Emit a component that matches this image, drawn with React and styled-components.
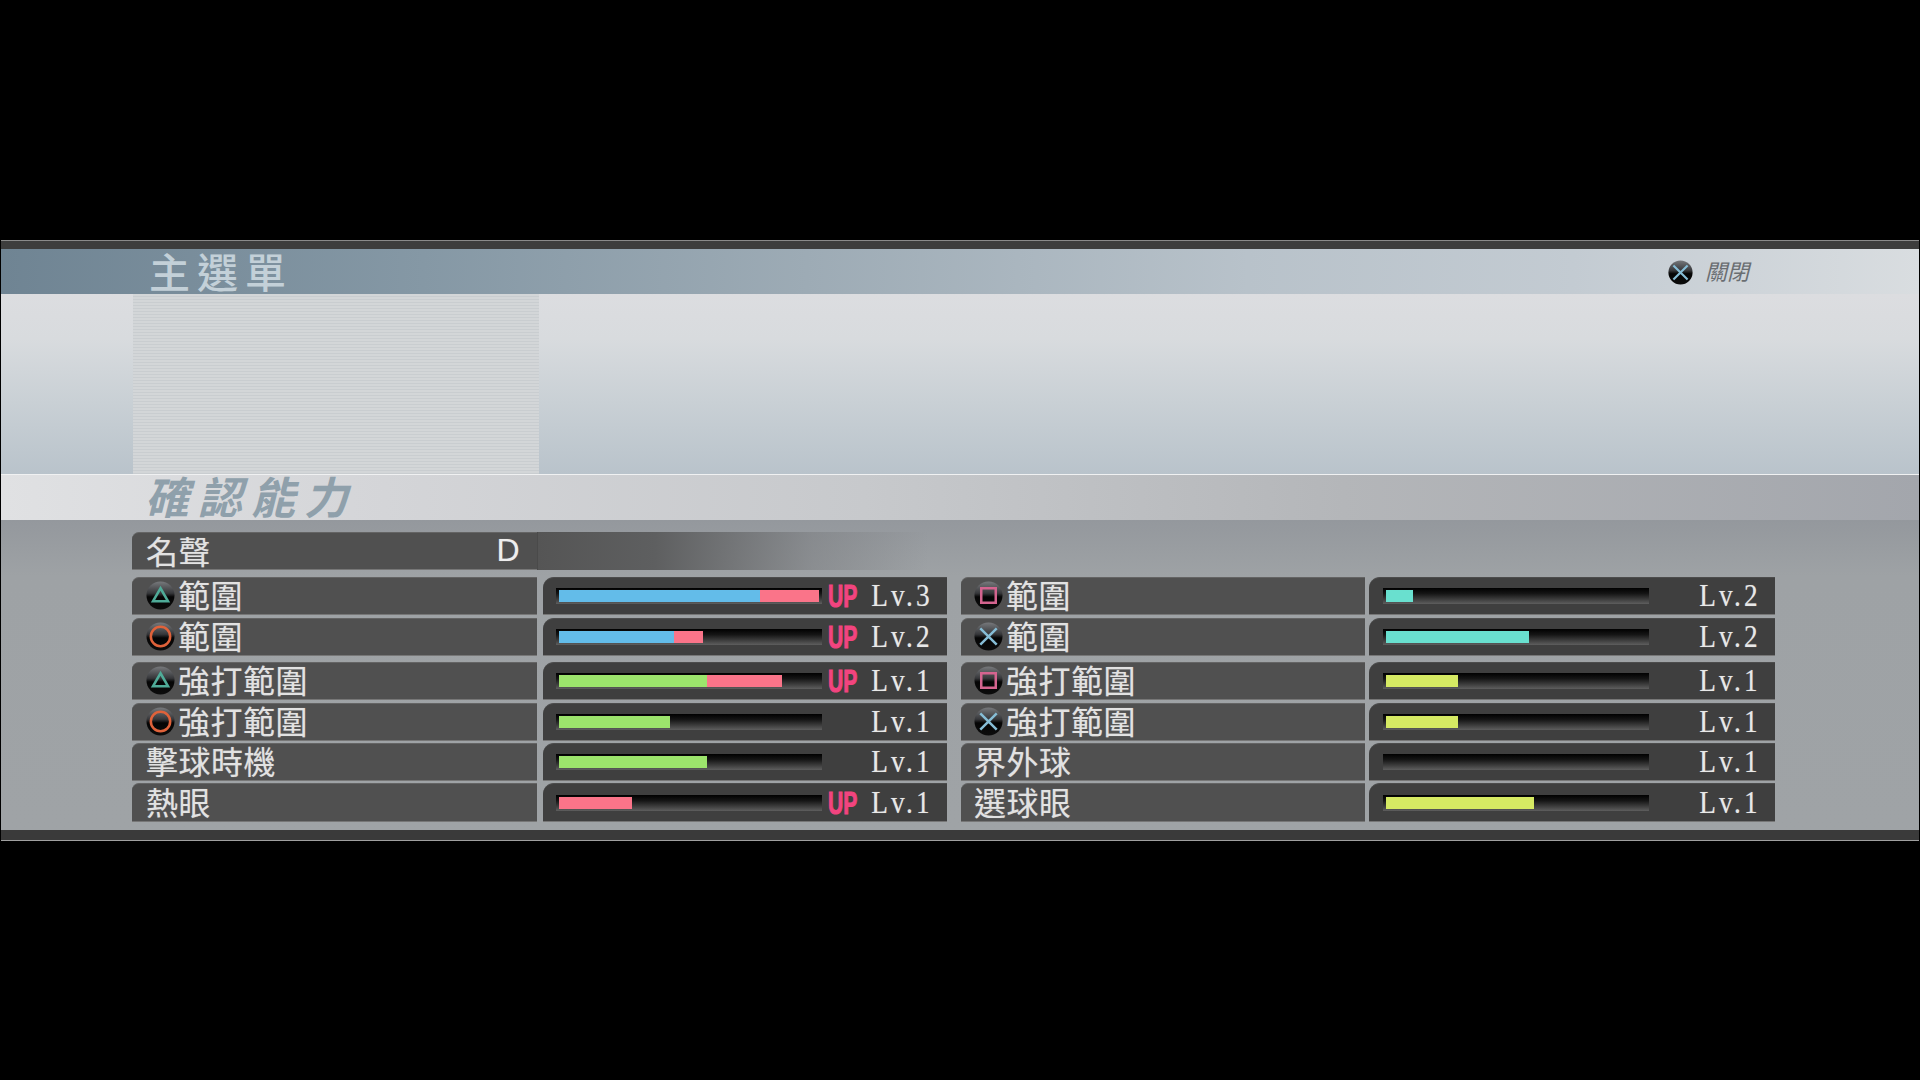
import React, { useId } from "react";
import styled, { createGlobalStyle } from "styled-components";

const CJK = `"Noto Sans CJK TC", "Noto Sans CJK SC", sans-serif`;

const Global = createGlobalStyle`
  html, body { margin: 0; padding: 0; background: #000; }
`;

const Screen = styled.div`
  width: 1920px;
  height: 1080px;
  background: #000;
  padding: 240px 1px 0;
  box-sizing: border-box;
  overflow: hidden;
`;

const Frame = styled.div`
  display: flex;
  flex-direction: column;
`;

const TopEdge = styled.div`
  height: 8px;
  background: #3d3d3d;
  border-top: 1px solid #8a8a8a;
`;

const TitleBand = styled.header`
  height: 45px;
  display: flex;
  align-items: center;
  justify-content: space-between;
  padding: 0 170px 0 148px;
  background: linear-gradient(90deg, #6f8493 0%, #8598a5 22%, #9dabb5 42%, #b8c2ca 65%, #c3cbd2 82%, #d9dde0 100%);
`;

const MainTitle = styled.h1`
  margin: 0;
  padding-bottom: 2px;
  font: 500 41px/43px ${CJK};
  letter-spacing: 7px;
  color: #c3d0d8;
`;

const CloseHint = styled.div`
  display: flex;
  align-items: center;
  gap: 12px;
`;

const CloseLabel = styled.span`
  padding-bottom: 4px;
  font: 400 22px/26px ${CJK};
  font-style: italic;
  color: #6a6e72;
`;

const PhotoPanel = styled.section`
  height: 180px;
  padding-left: 132px;
  background: linear-gradient(180deg, #dcdde0 0%, #d8dbde 25%, #c9d0d5 60%, #b9c3cb 100%);
`;

const PortraitSlot = styled.div`
  width: 406px;
  height: 100%;
  background: repeating-linear-gradient(180deg, #d3d6d8 0 2px, #c9cdd0 2px 3px);
`;

const SubBand = styled.div`
  height: 45px;
  padding-left: 144px;
  border-top: 1px solid #f0f1f2;
  background: linear-gradient(90deg, #e0e1e3 0%, #d4d5d8 20%, #c7c9cc 45%, #b4b6b9 70%, #a3a6ac 100%);
`;

const SubTitle = styled.h2`
  margin: 0;
  font: 700 44px/41px ${CJK};
  font-style: italic;
  letter-spacing: 9px;
  color: #8fa0ab;
`;

const StatsArea = styled.main`
  height: 310px;
  box-sizing: border-box;
  padding: 12px 0 0 131px;
  background: linear-gradient(180deg, #94989d 0%, #9ea2a5 18%, #9fa3a6 100%);
`;

const FameRow = styled.div`
  display: flex;
  height: 38px;
  margin-bottom: 7px;
`;

const LabelCell = styled.div`
  box-sizing: border-box;
  display: flex;
  align-items: center;
  justify-content: ${(p) => (p.$spread ? "space-between" : "flex-start")};
  padding: 0 18px 4px 14px;
  background: #505050;
  border-top: 1px solid #646464;
  border-bottom: 1px solid #777;
  border-top-left-radius: 7px;
  color: #e2e2e2;
  font: 400 32px/32px ${CJK};
  letter-spacing: 0.5px;
  text-shadow: 0 0 1px rgba(255, 255, 255, 0.35);
`;

const FameLabel = styled(LabelCell)`
  width: 405px;
  flex: none;
  padding-right: 17px;
  padding-bottom: 2px;
`;

const LatinGrade = styled.span`
  font: 400 32px/32px "Liberation Sans", Arial, sans-serif;
  color: #eee;
`;

const Fade = styled.div`
  width: 390px;
  background: linear-gradient(90deg, #555 0%, #5e5f60 30%, rgba(120, 122, 125, 0.5) 70%, rgba(154, 158, 162, 0) 100%);
  border-left: 1px solid #4a4a4a;
`;

const Row = styled.div`
  display: grid;
  grid-template-columns: 405px 406px 414px 406px;
  column-gap: 4px;
  height: ${(p) => p.$h}px;
  margin-top: ${(p) => p.$mt}px;
`;

const RightLabel = styled(LabelCell)`
  margin-left: 10px;
  padding-left: 13px;
`;

const ValueCell = styled.div`
  box-sizing: border-box;
  display: flex;
  align-items: center;
  padding: 0 17px 0 ${(p) => p.$inset}px;
  background: #3f3f3f;
  border-top: 1px solid #4c4c4c;
  border-bottom: 1px solid #777;
  border-top-left-radius: 11px;
  margin-left: ${(p) => p.$shift}px;
`;

const Track = styled.div`
  width: 266px;
  height: 16px;
  flex: none;
  box-sizing: border-box;
  display: flex;
  padding: 2px 3px;
  background: linear-gradient(180deg, #000 0%, #151515 35%, #3c3c3c 70%, #5e5e5e 100%);
`;

const Segment = styled.div`
  height: 12px;
  background: ${(p) => p.$color};
`;

const UpMark = styled.span`
  margin-left: 6px;
  width: 29px;
  flex: none;
  font: 700 32px/30px "Liberation Sans", Arial, sans-serif;
  color: #f2447f;
  -webkit-text-stroke: 1.1px #f2447f;
  transform: scaleX(0.66);
  transform-origin: left center;
`;

const Level = styled.span`
  margin-left: auto;
  margin-right: -3px;
  font: 400 31px/32px "Liberation Serif", "Times New Roman", serif;
  letter-spacing: 3.5px;
  color: #e8e8e8;
  text-shadow: 0 0 1px rgba(255, 255, 255, 0.4);
  transform: scaleX(0.88);
  transform-origin: right center;
`;

const IconBox = styled.svg`
  width: ${(p) => p.$size}px;
  height: ${(p) => p.$size}px;
  flex: none;
  margin-right: ${(p) => p.$gap}px;
  margin-top: ${(p) => p.$lift}px;
`;

const GLYPH = {
  triangle: { color: "#4fab98", el: <path d="M15 7.5 L22.8 21 L7.2 21 Z" fill="none" strokeWidth="2.6" strokeLinejoin="miter" /> },
  circle: { color: "#e0623a", el: <circle cx="15" cy="15" r="10" fill="none" strokeWidth="2.6" /> },
  square: { color: "#d4648f", el: <rect x="7.5" y="7.5" width="15" height="15" fill="none" strokeWidth="2.6" /> },
  cross: { color: "#86bdd6", el: <path d="M6.5 6.5 L23.5 23.5 M23.5 6.5 L6.5 23.5" fill="none" strokeWidth="2.6" /> },
};

function PadIcon({ kind, size = 29, gap = 3, lift = 0 }) {
  const id = useId();
  const g = GLYPH[kind];
  return (
    <IconBox viewBox="0 0 30 30" $size={size} $gap={gap} $lift={lift}>
      <defs>
        <linearGradient id={id} x1="0" y1="0" x2="0" y2="1">
          <stop offset="0" stopColor="#77797c" />
          <stop offset="0.42" stopColor="#36373a" />
          <stop offset="0.55" stopColor="#050505" />
          <stop offset="1" stopColor="#0c0c0c" />
        </linearGradient>
      </defs>
      <circle cx="15" cy="15" r="14.5" fill={`url(#${id})`} />
      <g stroke={g.color} strokeLinecap="butt">{g.el}</g>
    </IconBox>
  );
}

const C = { blue: "#63bce9", pink: "#fa7489", green: "#9ce46c", teal: "#69e0cf", yellow: "#d6ea63" };

const ROWS = [
  { h: 37, mt: 0,
    left: { icon: "triangle", text: "範圍", segs: [[202, C.blue], [59, C.pink]], up: true, lv: 3 },
    right: { icon: "square", text: "範圍", segs: [[27, C.teal]], lv: 2 } },
  { h: 37, mt: 4,
    left: { icon: "circle", text: "範圍", segs: [[115, C.blue], [29, C.pink]], up: true, lv: 2 },
    right: { icon: "cross", text: "範圍", segs: [[143, C.teal]], lv: 2 } },
  { h: 38, mt: 7,
    left: { icon: "triangle", text: "強打範圍", segs: [[148, C.green], [75, C.pink]], up: true, lv: 1 },
    right: { icon: "square", text: "強打範圍", segs: [[72, C.yellow]], lv: 1 } },
  { h: 37, mt: 3,
    left: { icon: "circle", text: "強打範圍", segs: [[111, C.green]], lv: 1 },
    right: { icon: "cross", text: "強打範圍", segs: [[72, C.yellow]], lv: 1 } },
  { h: 37, mt: 3,
    left: { text: "擊球時機", segs: [[148, C.green]], lv: 1 },
    right: { text: "界外球", segs: [], lv: 1 } },
  { h: 39, mt: 3,
    left: { text: "熱眼", segs: [[73, C.pink]], up: true, lv: 1 },
    right: { text: "選球眼", segs: [[148, C.yellow]], lv: 1 } },
];

function Value({ data, shift, inset }) {
  return (
    <ValueCell $shift={shift} $inset={inset}>
      <Track>
        {data.segs.map(([w, color], i) => (
          <Segment key={i} $color={color} style={{ width: w }} />
        ))}
      </Track>
      {data.up && <UpMark>UP</UpMark>}
      <Level>Lv.{data.lv}</Level>
    </ValueCell>
  );
}

const BottomEdge = styled.div`
  height: 10px;
  background: #3a3a3a;
  border-bottom: 1px solid #a0a0a0;
`;

export default function App() {
  return (
    <>
      <Global />
      <Screen>
        <Frame>
          <TopEdge />
          <TitleBand>
            <MainTitle>主選單</MainTitle>
            <CloseHint>
              <PadIcon kind="cross" size={25} gap={0} lift={2} />
              <CloseLabel>關閉</CloseLabel>
            </CloseHint>
          </TitleBand>
          <PhotoPanel>
            <PortraitSlot />
          </PhotoPanel>
          <SubBand>
            <SubTitle>確認能力</SubTitle>
          </SubBand>
          <StatsArea>
            <FameRow>
              <FameLabel $spread>
                名聲
                <LatinGrade>D</LatinGrade>
              </FameLabel>
              <Fade />
            </FameRow>
            {ROWS.map((r, i) => (
              <Row key={i} $h={r.h} $mt={r.mt}>
                <LabelCell>
                  {r.left.icon && <PadIcon kind={r.left.icon} lift={3} />}
                  {r.left.text}
                </LabelCell>
                <Value data={r.left} shift={2} inset={13} />
                <RightLabel>
                  {r.right.icon && <PadIcon kind={r.right.icon} lift={3} />}
                  {r.right.text}
                </RightLabel>
                <Value data={r.right} shift={0} inset={14} />
              </Row>
            ))}
          </StatsArea>
          <BottomEdge />
        </Frame>
      </Screen>
    </>
  );
}
